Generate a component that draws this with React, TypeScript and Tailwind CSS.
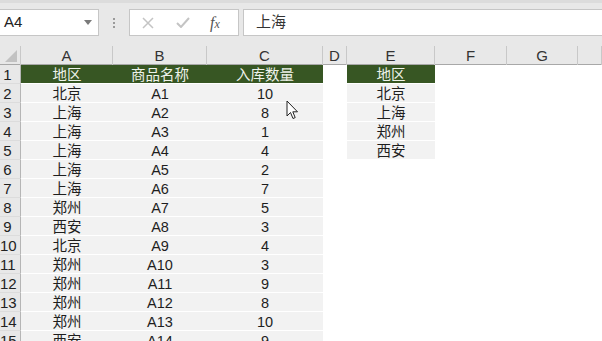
import React from "react";

const rows: [string, string, string, string][] = [
  ["北京", "A1", "10", "北京"],
  ["上海", "A2", "8", "上海"],
  ["上海", "A3", "1", "郑州"],
  ["上海", "A4", "4", "西安"],
  ["上海", "A5", "2", ""],
  ["上海", "A6", "7", ""],
  ["郑州", "A7", "5", ""],
  ["西安", "A8", "3", ""],
  ["北京", "A9", "4", ""],
  ["郑州", "A10", "3", ""],
  ["郑州", "A11", "9", ""],
  ["郑州", "A12", "8", ""],
  ["郑州", "A13", "10", ""],
  ["西安", "A14", "9", ""],
  ["北京", "A15", "6", ""],
];

const cols = "grid grid-cols-[21px_92px_94px_116px_24px_88px_72px_71px_1fr]";
const font = { fontFamily: '"Liberation Sans", "Noto Sans CJK SC", sans-serif' };

function RowNum({ n }: { n: number }) {
  return (
    <div className="h-[19px] border-r border-b border-r-[#b5b5b5] border-b-[#dcdcdc] bg-[#e8e8e8] text-[#222] text-[15px] leading-[20px]">
      <span className="inline-block w-[15px] text-center">{n}</span>
    </div>
  );
}

export default function App() {
  return (
    <div className="w-[602px] h-[341px] overflow-hidden bg-white relative" style={font}>
      {/* top toolbar */}
      <div className="h-[46px] bg-[#e8e8e8] border-t-[3px] border-[#dcdcdc]">
        <div className="flex items-center h-[27px] mt-[6px]">
          <div className="w-[99px] h-[27px] bg-white border border-[#c6c6c6] border-l-0 flex items-center justify-between pl-[4px] pr-[6px]">
            <span className="text-[15px] text-[#222]">A4</span>
            <svg width="8" height="5" viewBox="0 0 8 5"><path d="M0 0 H8 L4 5 Z" fill="#7a7a7a" /></svg>
          </div>
          <div className="w-[30px] flex flex-col items-center gap-[2px]">
            <div className="w-[2px] h-[2px] bg-[#9a9a9a]" />
            <div className="w-[2px] h-[2px] bg-[#9a9a9a]" />
            <div className="w-[2px] h-[2px] bg-[#9a9a9a]" />
          </div>
          <div className="w-[110px] h-[27px] bg-white border border-[#c6c6c6] flex items-center">
            <svg className="ml-[12px]" width="12" height="12" viewBox="0 0 12 12">
              <path d="M1 1 L11 11 M11 1 L1 11" stroke="#c4c4c4" strokeWidth="1.5" />
            </svg>
            <svg className="ml-[22px]" width="14" height="11" viewBox="0 0 14 11">
              <path d="M1 6 L5 10 L13 1" stroke="#c4c4c4" strokeWidth="2" fill="none" />
            </svg>
            <span className="ml-[20px] text-[16px] italic text-[#555] leading-none" style={{ fontFamily: '"Liberation Serif", serif' }}>
              f<span className="text-[12px]">x</span>
            </span>
          </div>
          <div className="flex-1 h-[27px] ml-[4px] bg-white border border-[#c6c6c6] border-r-0 flex items-center pl-[12px]">
            <span className="text-[15px] text-[#333]">上海</span>
          </div>
        </div>
      </div>

      {/* column headers */}
      <div className={`${cols} h-[19px] bg-[#e8e8e8] border-b border-[#a8a8a8] text-[15px] text-[#333] leading-[18px]`}>
        <div className="relative border-r border-[#c8c8c8]">
          <svg className="absolute right-[3px] bottom-[3px]" width="12" height="12" viewBox="0 0 12 12">
            <path d="M12 0 V12 H0 Z" fill="#c2c2c2" />
          </svg>
        </div>
        {["A", "B", "C", "D", "E", "F", "G", ""].map((c, i) => (
          <div key={i} className="text-center border-r border-[#c8c8c8] pt-[1px]">{c}</div>
        ))}
      </div>

      {/* row 1 */}
      <div className={`${cols} text-[14.5px] leading-[20px]`}>
        <RowNum n={1} />
        <div className="h-[19px] bg-[#375623] text-[#eef2ea] text-center border-b border-white">地区</div>
        <div className="h-[19px] bg-[#375623] text-[#eef2ea] text-center border-b border-white">商品名称</div>
        <div className="h-[19px] bg-[#375623] text-[#eef2ea] text-center border-b border-white">入库数量</div>
        <div className="h-[19px]" />
        <div className="h-[19px] bg-[#375623] text-[#eef2ea] text-center border-b border-white">地区</div>
        <div />
        <div />
        <div />
      </div>

      {rows.map((r, i) => (
        <div key={i} className={`${cols} text-[14.5px] leading-[20px] text-[#1e1e1e]`}>
          <RowNum n={i + 2} />
          <div className="h-[19px] bg-[#f2f2f2] text-center border-b border-white">{r[0]}</div>
          <div className="h-[19px] bg-[#f2f2f2] text-center border-b border-white">{r[1]}</div>
          <div className="h-[19px] bg-[#f2f2f2] text-center border-b border-white">{r[2]}</div>
          <div className="h-[19px]" />
          {r[3] ? (
            <div className="h-[19px] bg-[#f2f2f2] text-center border-b border-white">{r[3]}</div>
          ) : (
            <div className="h-[19px]" />
          )}
          <div />
          <div />
          <div />
        </div>
      ))}

      {/* mouse cursor */}
      <svg className="absolute left-[286px] top-[100px]" width="13" height="21" viewBox="0 0 13 21">
        <path d="M1 1 V16 L4.5 12.5 L7 18.5 L9.2 17.6 L6.8 11.8 L11.5 11.8 Z" fill="white" stroke="#222" strokeWidth="1" strokeLinejoin="round" />
      </svg>
    </div>
  );
}
